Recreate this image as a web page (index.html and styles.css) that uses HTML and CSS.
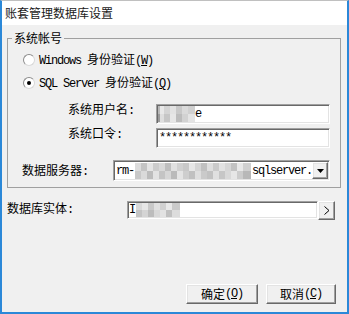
FILE: index.html
```html
<!DOCTYPE html>
<html lang="zh-CN">
<head>
<meta charset="utf-8">
<title>账套管理数据库设置</title>
<link rel="stylesheet" href="styles.css">
</head>
<body>
<div class="win">
  <div class="title">账套管理数据库设置</div>
  <div class="body">
    <fieldset class="group">
      <legend>系统帐号</legend>
      <label class="opt opt1"><span class="radio"></span><span><span class="m">Windows </span>身份验证<span class="m">(<u>W</u>)</span></span></label>
      <label class="opt opt2"><span class="radio on"></span><span><span class="m">SQL Server </span>身份验证<span class="m">(<u>Q</u>)</span></span></label>
      <div class="frow user">
        <span class="lbl">系统用户名<span class="m">:</span></span>
        <div class="input sunken"><span class="blur blur-user"></span><span class="m">e</span></div>
      </div>
      <div class="frow pass">
        <span class="lbl">系统口令<span class="m">:</span></span>
        <div class="input sunken"><span class="m stars">************</span></div>
      </div>
      <div class="frow server">
        <span class="lbl">数据服务器<span class="m">:</span></span>
        <div class="combo sunken">
          <span class="m">rm-</span><span class="blur blur-server"></span><span class="m">sqlserver.</span>
          <span class="ddbtn raised"><svg width="7" height="4" viewBox="0 0 7 4"><path d="M0 0H7L3.5 4Z" fill="#000"/></svg></span>
        </div>
      </div>
    </fieldset>
    <div class="erow">
      <span class="elbl">数据库实体<span class="m">:</span></span>
      <div class="einput sunken"><span class="m">I</span><span class="blur blur-entity"></span></div>
      <span class="ebtn raised"><svg width="6" height="9" viewBox="0 0 6 9"><path d="M0.5 0.5L5 4.5L0.5 8.5" fill="none" stroke="#000" stroke-width="1"/></svg></span>
    </div>
    <div class="btns">
      <button class="btn ok raised">确定<span class="m">(<u>O</u>)</span></button>
      <button class="btn cancel raised">取消<span class="m">(<u>C</u>)</span></button>
    </div>
  </div>
</div>
</body>
</html>
```
FILE: styles.css
```css
body {
  margin: 0;
  font-family: "Noto Sans CJK SC", sans-serif;
  font-size: 12px;
  color: #000;
}
.win {
  width: 349px;
  height: 314px;
  box-sizing: border-box;
  border: 2px solid #2b88d8;
  border-top: 1px solid #c0c0c0;
  display: flex;
  flex-direction: column;
  background: #f0f0f0;
}
.title {
  height: 24px;
  flex: none;
  background: #fff;
  padding-left: 3px;
  display: flex;
  align-items: center;
  line-height: 14px;
  color: #1a1a1a;
}
.body {
  flex: 1;
  display: flex;
  flex-direction: column;
  padding: 5px 6px 8px 5px;
}
.m {
  font-family: "Liberation Mono", monospace;
  font-size: 12px;
  letter-spacing: -1.2px;
}
u { text-underline-offset: 1px; }
.group {
  margin: 0;
  padding: 0 0 6px 0;
  border: 1px solid #a0a0a0;
  min-width: 0;
}
.group legend {
  margin-left: 4px;
  padding: 0 2px;
  line-height: 16px;
}
.opt {
  display: flex;
  align-items: center;
  height: 16px;
  padding-left: 15px;
  line-height: 16px;
}
.opt1 { margin-top: 6px; }
.opt2 { margin-top: 7px; }
.radio {
  width: 12px;
  height: 12px;
  box-sizing: border-box;
  border-radius: 50%;
  background: #fff;
  border: 1px solid;
  border-color: #8c8c8c #d8d8d8 #d8d8d8 #8c8c8c;
  margin-right: 4px;
  display: flex;
  align-items: center;
  justify-content: center;
}
.radio.on::after {
  content: "";
  width: 4px;
  height: 4px;
  border-radius: 50%;
  background: #000;
}
.sunken {
  box-sizing: border-box;
  background: #fff;
  border: 1px solid;
  border-color: #a0a0a0 #fff #fff #a0a0a0;
  box-shadow: inset 1px 1px 0 #696969, inset -1px -1px 0 #e3e3e3;
}
.raised {
  box-sizing: border-box;
  background: #f0f0f0;
  border: 1px solid;
  border-color: #fff #696969 #696969 #fff;
  box-shadow: inset -1px -1px 0 #a0a0a0, inset 1px 1px 0 #e3e3e3;
  padding: 0;
  display: flex;
  align-items: center;
  justify-content: center;
}
.frow {
  display: flex;
  align-items: flex-start;
  height: 20px;
  margin-right: 10px;
}
.frow .lbl {
  line-height: 14px;
  margin-top: -2px;
  flex: none;
}
.user { margin-top: 13px; padding-left: 60px; }
.pass { margin-top: 4px; padding-left: 60px; }
.user .lbl, .pass .lbl { width: 88px; }
.input {
  flex: 1;
  height: 20px;
  display: flex;
  align-items: center;
  padding-left: 1px;
  overflow: hidden;
}
.pass .input { padding-left: 2px; }
.server {
  margin-top: 12px;
  padding-left: 14px;
  height: 21px;
  align-items: center;
}
.server .lbl { width: 91px; margin-top: 0; }
.combo {
  flex: 1;
  height: 21px;
  display: flex;
  align-items: center;
  padding: 1px 1px 1px 2px;
  overflow: hidden;
}
.ddbtn {
  margin-left: auto;
  width: 17px;
  height: 17px;
}
.blur { display: inline-block; flex: none; }
.blur-user {
  width: 37px;
  height: 16px;
  background:
    linear-gradient(90deg, #b8b8b8 0 2px, #e8e8e8 2px 6px, #d4d4d4 6px 12px, #e2e2e2 12px 18px, #c8c8c8 18px 24px, #dadada 24px 30px, #d0d0d0 30px 37px) top / 100% 8px no-repeat,
    linear-gradient(90deg, #9a9a9a 0 2px, #dedede 2px 6px, #c6c6c6 6px 12px, #e6e6e6 12px 18px, #bcbcbc 18px 24px, #d2d2d2 24px 30px, #e4e4e4 30px 37px) bottom / 100% 8px no-repeat;
}
.blur-server {
  width: 116px;
  height: 16px;
  margin: 0 1px;
  background:
    linear-gradient(90deg, #dcdcdc 0 6px, #c4c4c4 6px 12px, #e4e4e4 12px 18px, #cccccc 18px 24px, #d8d8d8 24px 30px, #bebebe 30px 36px, #e0e0e0 36px 42px, #d0d0d0 42px 48px, #c8c8c8 48px 54px, #e6e6e6 54px 60px, #d4d4d4 60px 66px, #c0c0c0 66px 72px, #dedede 72px 78px, #cacaca 78px 84px, #e2e2e2 84px 90px, #d6d6d6 90px 96px, #c2c2c2 96px 102px, #e8e8e8 102px 108px, #d0d0d0 108px 116px) top / 100% 8px no-repeat,
    linear-gradient(90deg, #c8c8c8 0 6px, #dadada 6px 12px, #bcbcbc 12px 18px, #e2e2e2 18px 24px, #c4c4c4 24px 30px, #d6d6d6 30px 36px, #bababa 36px 42px, #e4e4e4 42px 48px, #cecece 48px 54px, #c0c0c0 54px 60px, #dedede 60px 66px, #cacaca 66px 72px, #c2c2c2 72px 78px, #e0e0e0 78px 84px, #c6c6c6 84px 90px, #d8d8d8 90px 96px, #e6e6e6 96px 102px, #cccccc 102px 108px, #b8b8b8 108px 116px) bottom / 100% 8px no-repeat;
}
.erow {
  display: flex;
  align-items: flex-start;
  margin-top: 13px;
  margin-right: 6px;
}
.elbl {
  width: 120px;
  flex: none;
  line-height: 14px;
}
.einput {
  flex: 1;
  height: 18px;
  display: flex;
  align-items: center;
  padding-left: 1px;
  overflow: hidden;
}
.blur-entity {
  width: 44px;
  height: 14px;
  margin-left: 1px;
  background:
    linear-gradient(90deg, #d8d8d8 0 6px, #e6e6e6 6px 12px, #c8c8c8 12px 18px, #e0e0e0 18px 24px, #d0d0d0 24px 30px, #e8e8e8 30px 36px, #cacaca 36px 44px) top / 100% 7px no-repeat,
    linear-gradient(90deg, #c4c4c4 0 6px, #d4d4d4 6px 12px, #bcbcbc 12px 18px, #d8d8d8 18px 24px, #e2e2e2 24px 30px, #c0c0c0 30px 36px, #dcdcdc 36px 44px) bottom / 100% 7px no-repeat;
}
.ebtn {
  width: 17px;
  height: 19px;
  flex: none;
}
.btns {
  margin-top: auto;
  display: flex;
  justify-content: flex-end;
  gap: 8px;
  margin-right: 5px;
}
.btn {
  height: 20px;
  font-family: "Noto Sans CJK SC", sans-serif;
  font-size: 12px;
  color: #000;
  line-height: 14px;
}
.ok { width: 72px; }
.cancel { width: 70px; }
```
